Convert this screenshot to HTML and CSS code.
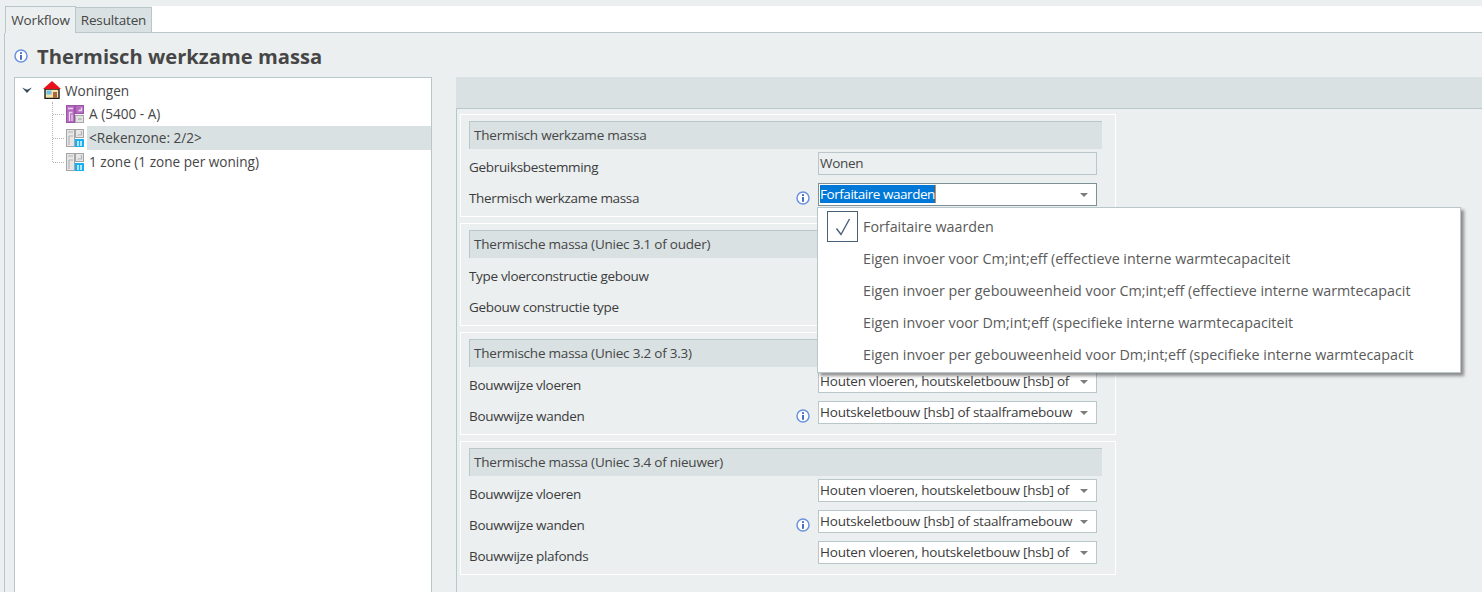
FILE: index.html
```html
<!DOCTYPE html>
<html lang="nl">
<head>
<meta charset="utf-8">
<title>Thermisch werkzame massa</title>
<link rel="stylesheet" href="styles.css">
</head>
<body>
<svg class="defs" width="0" height="0" aria-hidden="true">
  <defs>
    <symbol id="info" viewBox="0 0 14 14">
      <circle cx="7" cy="7" r="6" fill="#fff" stroke="#6a92e0" stroke-width="1.5"/>
      <rect x="6" y="6" width="2" height="4.800" fill="#4a6fc0"/>
      <rect x="6" y="3.200" width="2" height="1.800" fill="#4a6fc0"/>
    </symbol>
    <symbol id="zone" viewBox="0 0 18 18">
      <rect x=".5" y=".5" width="8" height="17" fill="#e6e6e6" stroke="#a4a4a4"/>
      <path d="M2 3h5M3 7h4M3 7v9" fill="none" stroke="#b4b4b4" stroke-width="1.200"/>
      <rect x="9.500" y=".5" width="8" height="8" fill="#e6e6e6" stroke="#a4a4a4"/>
      <path d="M15.500 2v4h-4" fill="none" stroke="#b4b4b4" stroke-width="1.200"/>
      <rect x="9" y="10" width="9" height="8" fill="#19aef2"/>
      <path d="M12 12v5M15 12v5" stroke="#e8f7fe" stroke-width="1.500"/>
    </symbol>
    <symbol id="zone-a" viewBox="0 0 18 18">
      <rect x=".5" y=".5" width="8" height="17" fill="#b56cc0" stroke="#9a55a8"/>
      <path d="M2 3.500h5M3 7.500h3.500M3.500 7.500V16M6 9.500V16" fill="none" stroke="#ecd6ef" stroke-width="1.300"/>
      <rect x="9.500" y=".5" width="8" height="8" fill="#b56cc0" stroke="#9a55a8"/>
      <path d="M15.500 2.500v3h-3" fill="none" stroke="#ecd6ef" stroke-width="1.400"/>
      <rect x="9.500" y="10.500" width="8" height="7" fill="#e2e2e2" stroke="#a8a8a8"/>
      <path d="M12 14h3.500" stroke="#b0b0b0" stroke-width="1.400"/>
    </symbol>
  </defs>
</svg>

<nav class="tabs">
  <div class="tab tab-active">Workflow</div>
  <div class="tab">Resultaten</div>
  <div class="tab-rest"></div>
</nav>

<main class="page">
  <header class="title">
    <svg class="info title-info"><use href="#info"/></svg>
    <h1>Thermisch werkzame massa</h1>
  </header>

  <div class="columns">
    <aside class="tree">
      <div class="tree-root">
        <svg class="chevron" viewBox="0 0 10 6"><path d="M0 .5 5 2.800 10 .5 5 6z" fill="#34495e"/></svg>
        <svg class="house" viewBox="0 0 18 18">
          <path d="M2 8h14v9.500H2z" fill="#f6e3a6" stroke="#1c1c1c" stroke-width="1.400"/>
          <path d="M0 8 9 0l9 8z" fill="#e8101c"/>
          <rect x="3.500" y="9.500" width="5" height="4" fill="#6cc0ea"/>
          <rect x="10" y="11" width="4" height="6" fill="#b0643a"/>
        </svg>
        <span class="tree-label">Woningen</span>
      </div>
      <div class="tree-children">
        <div class="tree-item">
          <svg class="zone-icon"><use href="#zone-a"/></svg>
          <span class="tree-label">A (5400 - A)</span>
        </div>
        <div class="tree-item">
          <svg class="zone-icon"><use href="#zone"/></svg>
          <span class="tree-label tree-selected">&lt;Rekenzone: 2/2&gt;</span>
        </div>
        <div class="tree-item">
          <svg class="zone-icon"><use href="#zone"/></svg>
          <span class="tree-label">1 zone (1 zone per woning)</span>
        </div>
      </div>
    </aside>

    <section class="detail">
      <div class="detail-bar"></div>
      <div class="groups">
        <div class="group">
          <h2 class="group-head">Thermisch werkzame massa</h2>
          <div class="row">
            <span class="label">Gebruiksbestemming</span>
            <div class="field field-static">Wonen</div>
          </div>
          <div class="row">
            <span class="label">Thermisch werkzame massa</span>
            <svg class="info"><use href="#info"/></svg>
            <div class="field field-active"><span class="selected-text">Forfaitaire waarden</span><i class="arrow"></i></div>
            <ul class="menu">
              <li class="menu-item"><span class="check"><svg viewBox="0 0 16 18" width="16" height="18"><path d="M1.500 10.500 6 16.500 14.500 1" fill="none" stroke="#4a6078" stroke-width="1.400"/></svg></span>Forfaitaire waarden</li>
              <li class="menu-item"><span class="check check-empty"></span>Eigen invoer voor Cm;int;eff (effectieve interne warmtecapaciteit</li>
              <li class="menu-item"><span class="check check-empty"></span>Eigen invoer per gebouweenheid voor Cm;int;eff (effectieve interne warmtecapacit</li>
              <li class="menu-item"><span class="check check-empty"></span>Eigen invoer voor Dm;int;eff (specifieke interne warmtecapaciteit</li>
              <li class="menu-item"><span class="check check-empty"></span>Eigen invoer per gebouweenheid voor Dm;int;eff (specifieke interne warmtecapacit</li>
            </ul>
          </div>
        </div>

        <div class="group">
          <h2 class="group-head">Thermische massa (Uniec 3.1 of ouder)</h2>
          <div class="row">
            <span class="label">Type vloerconstructie gebouw</span>
            <div class="field"><i class="arrow"></i></div>
          </div>
          <div class="row">
            <span class="label">Gebouw constructie type</span>
            <div class="field"><i class="arrow"></i></div>
          </div>
        </div>

        <div class="group">
          <h2 class="group-head">Thermische massa (Uniec 3.2 of 3.3)</h2>
          <div class="row">
            <span class="label">Bouwwijze vloeren</span>
            <div class="field"><span class="value">Houten vloeren, houtskeletbouw [hsb] of</span><i class="arrow"></i></div>
          </div>
          <div class="row">
            <span class="label">Bouwwijze wanden</span>
            <svg class="info"><use href="#info"/></svg>
            <div class="field"><span class="value">Houtskeletbouw [hsb] of staalframebouw</span><i class="arrow"></i></div>
          </div>
        </div>

        <div class="group">
          <h2 class="group-head">Thermische massa (Uniec 3.4 of nieuwer)</h2>
          <div class="row">
            <span class="label">Bouwwijze vloeren</span>
            <div class="field"><span class="value">Houten vloeren, houtskeletbouw [hsb] of</span><i class="arrow"></i></div>
          </div>
          <div class="row">
            <span class="label">Bouwwijze wanden</span>
            <svg class="info"><use href="#info"/></svg>
            <div class="field"><span class="value">Houtskeletbouw [hsb] of staalframebouw</span><i class="arrow"></i></div>
          </div>
          <div class="row">
            <span class="label">Bouwwijze plafonds</span>
            <div class="field"><span class="value">Houten vloeren, houtskeletbouw [hsb] of</span><i class="arrow"></i></div>
          </div>
        </div>
      </div>
    </section>
  </div>
</main>
</body>
</html>
```

FILE: styles.css
```css
* { box-sizing: border-box; }

html, body {
  margin: 0;
  height: 592px;
  overflow: hidden;
}

body {
  background: #ebeff0;
  color: #464646;
  font-family: "Open Sans", "Noto Sans", sans-serif;
  font-size: 13.5px;
  letter-spacing: -.3px;
  padding-top: 6px;
  display: flex;
  flex-direction: column;
}

.defs { position: absolute; }

.tabs {
  display: flex;
  height: 27px;
  padding-left: 5px;
  flex: none;
}

.tab {
  width: 76px;
  height: 26px;
  margin-top: 1px;
  background: #d9e1e2;
  border: 1px solid #b9c7cb;
  border-left: 0;
  line-height: 25px;
  text-align: center;
  font-size: 13.5px;
  letter-spacing: -.15px;
}

.tab-active {
  width: 71px;
  height: 27px;
  margin-top: 0;
  background: #ebeff0;
  border-left: 1px solid #b9c7cb;
  border-bottom: 0;
  line-height: 27px;
}

.tab-rest {
  flex: 1;
  background: #fff;
  border-bottom: 1px solid #b9c7cb;
}

.page {
  flex: 1;
  margin-left: 4px;
  border-left: 1px solid #b9c7cb;
  padding: 0 0 0 9px;
  display: flex;
  flex-direction: column;
  min-height: 0;
}

.title {
  display: flex;
  align-items: center;
  height: 44px;
  flex: none;
}

.info {
  width: 14px;
  height: 14px;
  flex: none;
}

.title-info {
  margin: 2px 9px 0 0;
}

h1 {
  margin: 1px 0 0;
  font-size: 20.2px;
  font-weight: 700;
  letter-spacing: 0;
  color: #464646;
}

.columns {
  flex: 1;
  display: flex;
  gap: 24px;
  min-height: 0;
}

.tree {
  width: 418px;
  flex: none;
  background: #fff;
  border: 1px solid #b9c7cb;
  border-bottom: 0;
  font-size: 13.6px;
  letter-spacing: 0;
}

.tree-root {
  height: 24px;
  display: flex;
  align-items: center;
  padding-left: 7px;
}

.chevron {
  width: 10px;
  height: 6px;
  flex: none;
  margin-right: 11px;
}

.house {
  width: 18px;
  height: 18px;
  flex: none;
  margin-right: 4px;
  margin-top: -1px;
}

.tree-children {
  margin-left: 37px;
  border-left: 1px dotted #b5b5b5;
  height: 60px;
  position: relative;
}

.tree-item {
  height: 24px;
  display: flex;
  align-items: center;
  padding-left: 13px;
  position: relative;
}

.tree-item::before {
  content: "";
  position: absolute;
  left: 0;
  top: 12px;
  width: 11px;
  border-top: 1px dotted #b5b5b5;
}

.zone-icon {
  width: 18px;
  height: 18px;
  flex: none;
  margin-right: 3px;
}

.tree-label {
  color: #464646;
  white-space: nowrap;
}

.tree-item .tree-label {
  flex: 1;
  height: 24px;
  line-height: 24px;
  padding-left: 2px;
}

.tree-selected {
  background: #d9e1e2;
}

.detail {
  flex: 1;
  min-width: 0;
  border-left: 1px solid #b9c7cb;
}

.detail-bar {
  height: 32px;
  background: #d9e1e2;
  border-bottom: 1px solid #b9c7cb;
  margin-left: -1px;
}

.groups {
  width: 659px;
  padding: 5px 0 0 3px;
  display: flex;
  flex-direction: column;
  gap: 6px;
}

.group {
  border: 1px solid #fff;
  padding: 6px 13px 10px 8px;
}

.group-head {
  margin: 0 0 3px;
  height: 28px;
  padding-left: 4px;
  background: #d9e1e2;
  border-top: 1px solid #b9c7cb;
  border-left: 1px solid #b9c7cb;
  font-size: 13.5px;
  font-weight: 400;
  letter-spacing: -.22px;
  line-height: 26px;
  color: #464646;
}

.row {
  display: flex;
  height: 31px;
  position: relative;
}

.row:last-child {
  height: 23px;
}

.label {
  flex: 1;
  line-height: 31px;
  color: #3c3c3c;
  white-space: nowrap;
  letter-spacing: -.32px;
}

.row > .info {
  margin: 8px 8px 0 0;
}

.field {
  width: 279px;
  height: 23px;
  background: #fff;
  border: 1px solid #b9c7cb;
  padding: 0 1px 2px;
  display: flex;
  align-items: center;
  line-height: 20px;
  white-space: nowrap;
  margin-right: 5px;
  flex: none;
}

.field-static {
  background: #ebeff0;
  padding-bottom: 1px;
}

.field-active {
  border-color: #7f8f96;
}

.selected-text {
  background: #0078d7;
  color: #fff;
  border-right: 1px solid #e88a2a;
  height: 18px;
  line-height: 18px;
  letter-spacing: -.45px;
}

.value {
  color: #3c3c3c;
  letter-spacing: -.22px;
}

.arrow {
  margin-left: auto;
  margin-right: 7px;
  margin-top: 2px;
  width: 0;
  height: 0;
  border-left: 4px solid transparent;
  border-right: 4px solid transparent;
  border-top: 4px solid #7d7d7d;
}

.menu {
  position: absolute;
  z-index: 5;
  left: 348px;
  top: 24px;
  width: 644px;
  margin: 0;
  padding: 3px 0 1px 9px;
  list-style: none;
  background: #fff;
  border: 1px solid #b9c7cb;
  box-shadow: 3px 3px 3px rgba(60, 60, 60, .55);
  font-size: 14.3px;
  letter-spacing: 0;
}

.menu-item {
  height: 32px;
  padding-bottom: 1px;
  display: flex;
  align-items: center;
  white-space: nowrap;
  color: #5a5a5a;
}

.check {
  width: 31px;
  height: 31px;
  margin-right: 5px;
  border: 1px solid #4a6078;
  display: flex;
  align-items: center;
  justify-content: center;
  flex: none;
}

.check-empty {
  border-color: transparent;
}
```
